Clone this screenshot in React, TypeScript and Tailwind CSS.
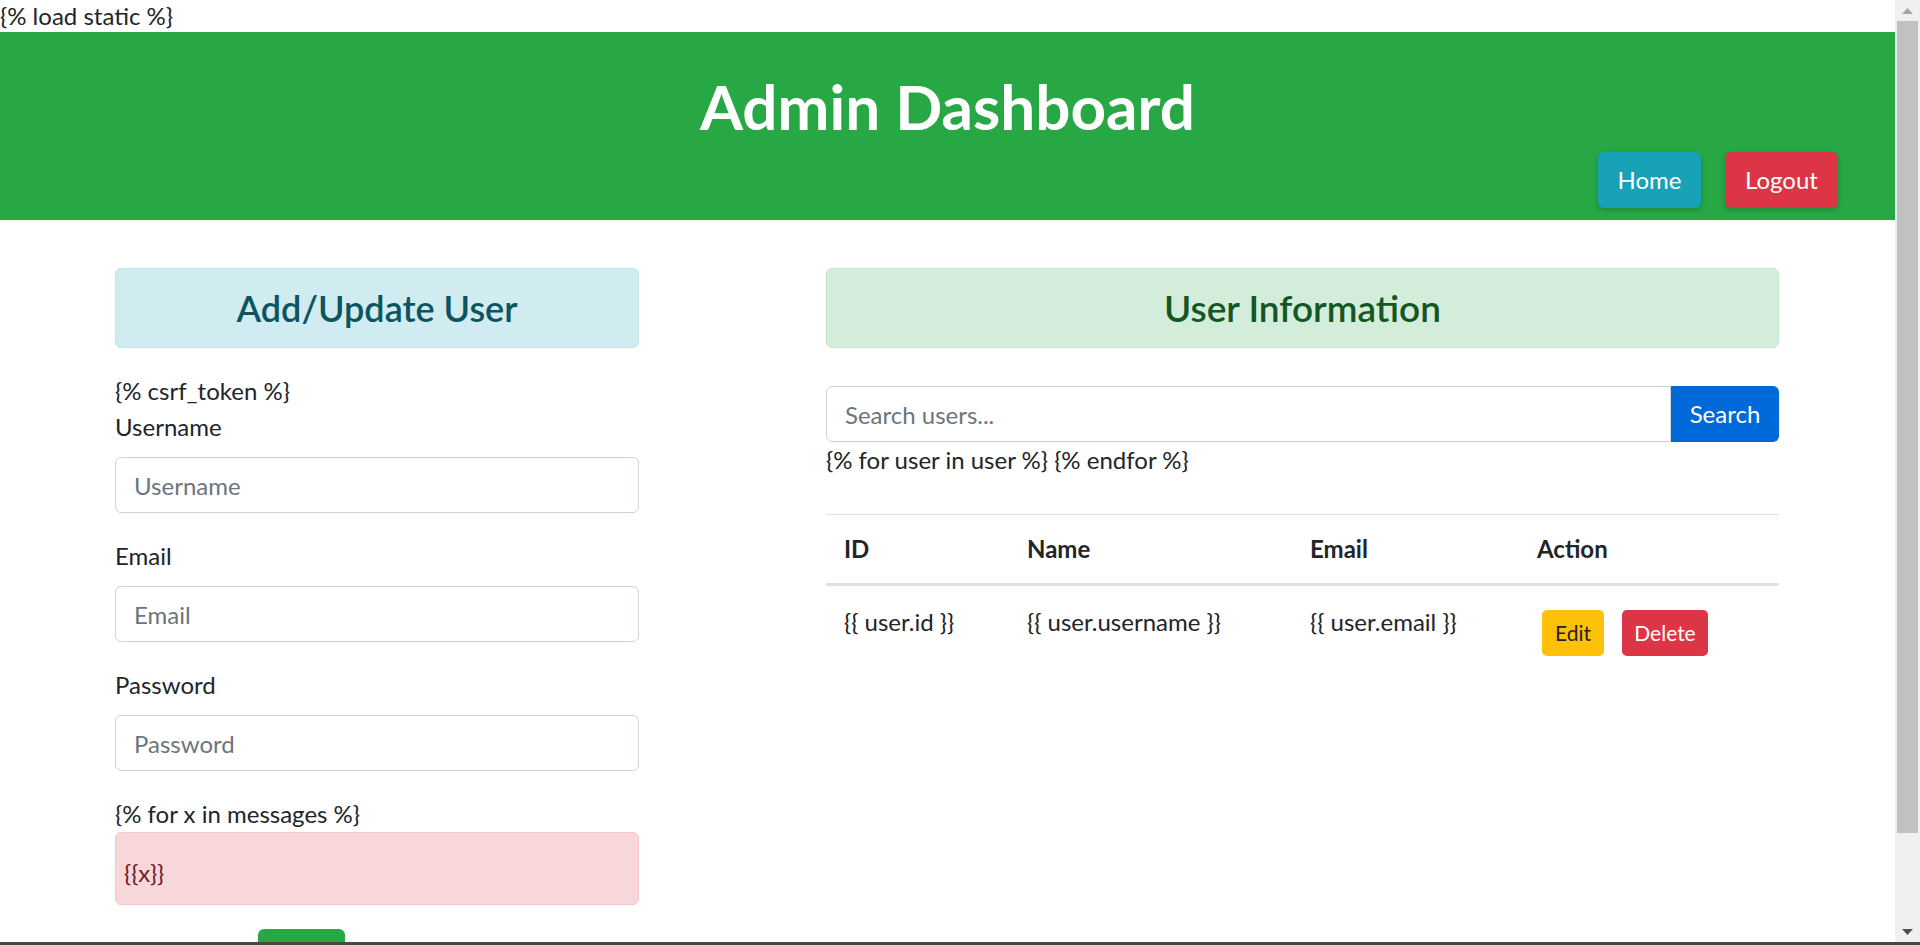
import React from "react";

function Scrollbar() {
  return (
    <div className="w-[25px] bg-[#f0f0f0] flex flex-col items-center shrink-0">
      <div className="h-[21px] flex items-center justify-center">
        <svg width="11" height="6" viewBox="0 0 11 6">
          <path d="M0 6 L5.5 0 L11 6 Z" fill="#a3a3a3" />
        </svg>
      </div>
      <div className="w-[21px] h-[812px] bg-[#c1c1c1]" />
      <div className="flex-1" />
      <div className="h-[21px] flex items-center justify-center">
        <svg width="11" height="6" viewBox="0 0 11 6">
          <path d="M0 0 L5.5 6 L11 0 Z" fill="#505050" />
        </svg>
      </div>
    </div>
  );
}

function Field({ label, placeholder, type }: { label: string; placeholder: string; type?: string }) {
  return (
    <div className="mb-[25px]">
      <label className="block mb-[12px]">{label}</label>
      <input
        type={type || "text"}
        placeholder={placeholder}
        className="block w-full h-[56px] px-[18px] border border-[#ced4da] rounded-[6px] bg-white text-[24px] placeholder:text-[#6c757d] outline-none"
      />
    </div>
  );
}

export default function App() {
  return (
    <div className="w-[1920px] h-[945px] overflow-hidden flex flex-col bg-white text-[#212529] font-['Lato',sans-serif] text-[24px] leading-[36px]">
      <div className="flex flex-1 min-h-0">
        <div className="flex-1 min-w-0 overflow-hidden">
          <div className="h-[32px] leading-[32px]">{"{% load static %}"}</div>
          <header className="bg-[#28a745] h-[188px] pt-[38px] flex flex-col">
            <h1 className="text-center text-white font-bold text-[62px] leading-[72px]">Admin Dashboard</h1>
            <div className="flex justify-end gap-[24px] pr-[57px] mt-[10px]">
              <button className="h-[56px] w-[103px] rounded-[6px] bg-[#17a2b8] text-white shadow-[0_2px_5px_rgba(0,0,0,0.2)]">
                Home
              </button>
              <button className="h-[56px] w-[113px] rounded-[6px] bg-[#dc3545] text-white shadow-[0_2px_5px_rgba(0,0,0,0.2)]">
                Logout
              </button>
            </div>
          </header>

          <main className="flex pt-[48px] pl-[115px]">
            <section className="w-[524px] shrink-0">
              <div className="h-[80px] border border-[#bee5eb] bg-[#d1ecf1] rounded-[6px] flex items-center justify-center text-[#0c5460] text-[36px] font-semibold">
                Add/Update User
              </div>
              <div className="mt-[25px]">{"{% csrf_token %}"}</div>
              <Field label="Username" placeholder="Username" />
              <Field label="Email" placeholder="Email" type="email" />
              <Field label="Password" placeholder="Password" type="password" />
              <div>{"{% for x in messages %}"}</div>
              <div className="h-[73px] border border-[#f5c6cb] bg-[#f8d7da] rounded-[6px] pl-[8px] pt-[22px] text-[#721c24]">
                {"{{x}}"}
              </div>
              <button
                aria-label="Submit"
                className="block ml-[143px] mt-[24px] w-[87px] h-[57px] bg-[#28a745] rounded-[6px]"
              />
            </section>

            <section className="w-[953px] ml-[187px] shrink-0">
              <div className="h-[80px] border border-[#c3e6cb] bg-[#d4edda] rounded-[6px] flex items-center justify-center text-[#155724] text-[37px] font-semibold">
                User Information
              </div>
              <div className="mt-[38px] flex h-[56px]">
                <input
                  type="text"
                  placeholder="Search users..."
                  className="flex-1 min-w-0 h-full px-[18px] border border-[#ced4da] rounded-l-[6px] text-[24px] placeholder:text-[#6c757d] outline-none"
                />
                <button className="w-[108px] h-full bg-[#0069d9] text-white rounded-r-[6px]">Search</button>
              </div>
              <div>{"{% for user in user %} {% endfor %}"}</div>
              <table className="mt-[36px] w-full table-fixed border-collapse">
                <colgroup>
                  <col className="w-[183px]" />
                  <col className="w-[283px]" />
                  <col className="w-[227px]" />
                  <col />
                </colgroup>
                <thead>
                  <tr>
                    <th className="text-left font-bold px-[18px] py-[16px] border-t border-b-[3px] border-[#dee2e6]">ID</th>
                    <th className="text-left font-bold px-[18px] py-[16px] border-t border-b-[3px] border-[#dee2e6]">Name</th>
                    <th className="text-left font-bold px-[18px] py-[16px] border-t border-b-[3px] border-[#dee2e6]">Email</th>
                    <th className="text-left font-bold px-[18px] py-[16px] border-t border-b-[3px] border-[#dee2e6]">Action</th>
                  </tr>
                </thead>
                <tbody>
                  <tr>
                    <td className="px-[18px] py-[18px] align-top">{"{{ user.id }}"}</td>
                    <td className="px-[18px] py-[18px] align-top">{"{{ user.username }}"}</td>
                    <td className="px-[18px] py-[18px] align-top">{"{{ user.email }}"}</td>
                    <td className="px-[18px] py-[18px] align-top">
                      <div className="flex gap-[18px] ml-[5px] mt-[6px]">
                        <button className="h-[46px] w-[62px] text-[21px] rounded-[5px] bg-[#ffc107] text-[#212529]">Edit</button>
                        <button className="h-[46px] w-[86px] text-[21px] rounded-[5px] bg-[#dc3545] text-white">Delete</button>
                      </div>
                    </td>
                  </tr>
                </tbody>
              </table>
            </section>
          </main>
        </div>
        <Scrollbar />
      </div>
      <div className="h-[3px] bg-[#474747] shrink-0" />
    </div>
  );
}
